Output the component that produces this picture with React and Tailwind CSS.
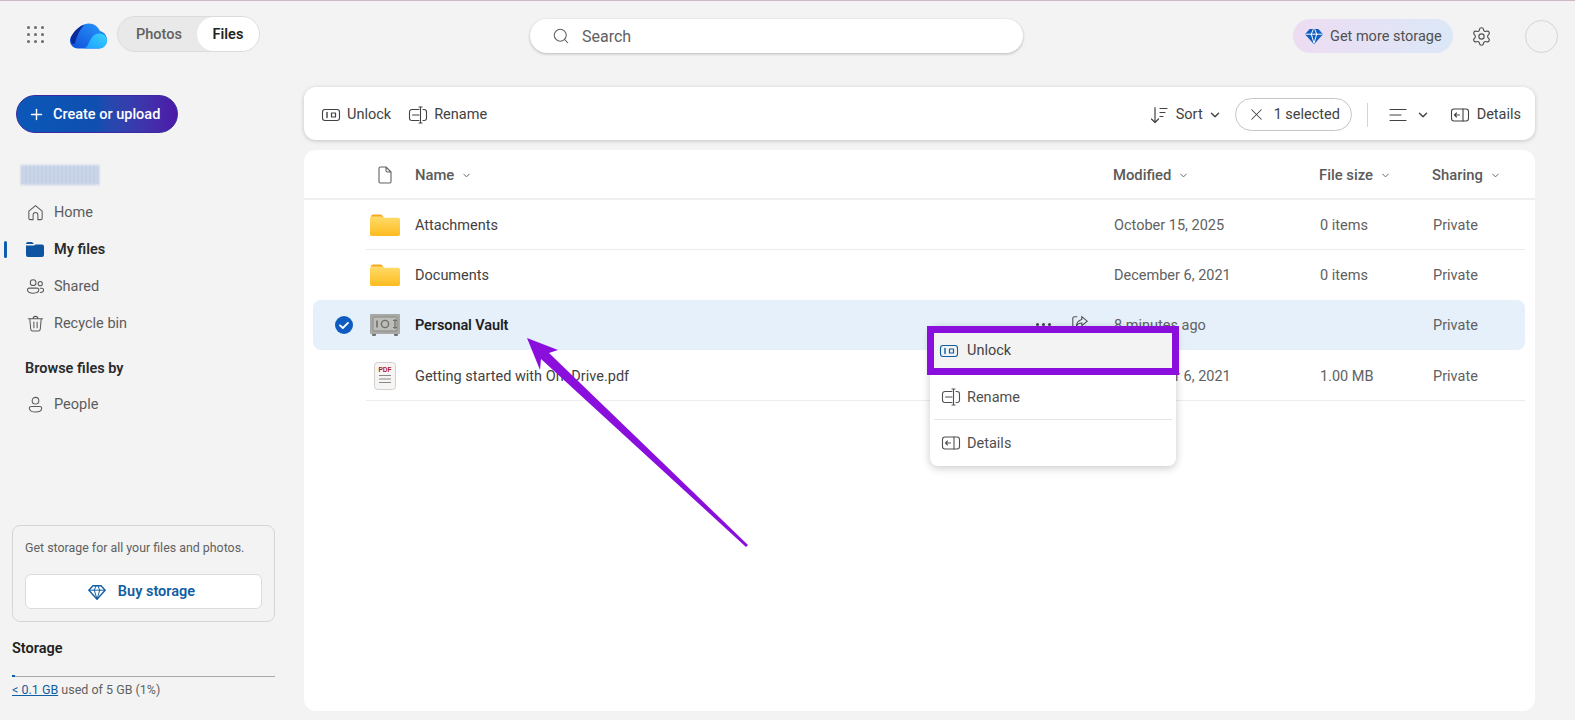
import React from 'react';
import { ChevronDown, Plus, Search, Settings, X } from 'lucide-react';

const Svg = ({ className = 'w-5 h-5', children, vb = '0 0 20 20' }) => (
  <svg viewBox={vb} fill="none" stroke="currentColor" strokeWidth="1.1" strokeLinecap="round" strokeLinejoin="round" className={className}>{children}</svg>
);

const UnlockIcon = ({ className }) => (
  <Svg className={className}>
    <rect x="1.5" y="4.5" width="17" height="11" rx="2.5" />
    <path d="M6 7.5v5" strokeWidth="1.4" />
    <rect x="10.5" y="8" width="4" height="4" strokeWidth="1.2" />
  </Svg>
);
const RenameIcon = ({ className }) => (
  <Svg className={className}>
    <path d="M11 4.5H4A2.5 2.5 0 0 0 1.5 7v6A2.5 2.5 0 0 0 4 15.5h7" />
    <path d="M4.5 10h6.5" />
    <path d="M11 2h3M11 18h3M12.5 2v16" />
    <path d="M15 4.5h1A2.5 2.5 0 0 1 18.5 7v6a2.5 2.5 0 0 1-2.5 2.5h-1" />
  </Svg>
);
const DetailsIcon = ({ className }) => (
  <Svg className={className}>
    <rect x="1.5" y="4" width="17" height="12" rx="2.5" />
    <path d="M13 4v12" />
    <path d="M9.5 10H4.5M6.5 8l-2 2 2 2" />
  </Svg>
);
const Diamond = ({ className, fill }) => (
  <Svg className={className}>
    <path d="M5.5 3h9L19 8l-9 10L1 8z" fill={fill} strokeWidth="1.5" />
    <path d="M1 8h18M7 8l3 10 3-10M7 8l2-5M13 8l-2-5" stroke={fill ? '#fff' : 'currentColor'} strokeWidth="1.1" />
  </Svg>
);
const Folder = () => (
  <svg viewBox="0 0 30 22" className="w-[30px] h-[22px]">
    <defs>
      <linearGradient id="fold" x1="0" y1="0" x2="0" y2="1">
        <stop offset="0" stopColor="#ffdc6b" />
        <stop offset="1" stopColor="#fdbb1f" />
      </linearGradient>
    </defs>
    <path d="M1 2.5A2 2 0 0 1 3 .5h7.5a2 2 0 0 1 1.5.7L14 3.5H1z" fill="#f5a821" />
    <path d="M0 4a1.5 1.5 0 0 1 1.5-1.5H12l2 1.2h14.2A1.8 1.8 0 0 1 30 5.5v14.7a1.8 1.8 0 0 1-1.8 1.8H1.8A1.8 1.8 0 0 1 0 20.2z" fill="url(#fold)" />
  </svg>
);
const Vault = () => (
  <svg viewBox="0 0 30 22" className="w-[30px] h-[22px]">
    <rect x="2" y="19" width="4" height="3" rx="1" fill="#707070" />
    <rect x="24" y="19" width="4" height="3" rx="1" fill="#707070" />
    <rect x="0" y="0" width="30" height="20" rx="1" fill="#a8a8a5" />
    <rect x="3" y="3" width="24" height="14" rx="1" fill="#bcbcb8" stroke="#8a8a87" />
    <path d="M7 6.5v7" stroke="#6e6e6c" strokeWidth="1.6" />
    <circle cx="15" cy="10" r="3.6" fill="none" stroke="#6e6e6c" strokeWidth="1.4" />
    <path d="M25 5v10M23 6.5h4M23 13.5h4" stroke="#6e6e6c" strokeWidth="1.2" />
  </svg>
);
const Pdf = () => (
  <svg viewBox="0 0 22 28" className="w-[22px] h-[28px]">
    <rect x=".5" y=".5" width="21" height="27" rx="3" fill="#f6f5f3" stroke="#d2d0ce" />
    <text x="4.5" y="10" fontSize="6.5" fontWeight="700" fill="#b2182b" fontFamily="Liberation Sans, sans-serif">PDF</text>
    <path d="M5 13.5h12M5 17h12M5 20.5h12" stroke="#8a8886" strokeWidth="1" />
  </svg>
);
const Cloud = () => (
  <svg viewBox="0 0 37 26" className="w-[37px] h-[26px]">
    <defs>
      <linearGradient id="cl1" x1="0" y1="1" x2="1" y2="0">
        <stop offset="0" stopColor="#0f4fd8" />
        <stop offset="1" stopColor="#2a9bff" />
      </linearGradient>
      <linearGradient id="cl2" x1="0" y1="1" x2="1" y2="0">
        <stop offset="0" stopColor="#1a9cff" />
        <stop offset="1" stopColor="#3ad4ff" />
      </linearGradient>
    </defs>
    <path d="M8 25.5C3 25.5 0 21.5 0 17.5 0 13.5 3 11 6 10.5 8 4 13 .5 19 .5c5 0 9 3 11 7.5 4 1 7 4 7 9s-4 8.5-8 8.5z" fill="url(#cl1)" />
    <path d="M1 14C4 8 9 3 14 2 10 6 7 12 5 20c-1 2-3 1-4-1z" fill="#0a2a9c" />
    <path d="M13 25.5c4 0 5-4 7-8s5-7 9-7c5 0 8 3 8 7.5 0 4-4 7.5-8 7.5z" fill="url(#cl2)" />
  </svg>
);

const NAV = [
  { label: 'Home', icon: <path d="M10 2.8 3 8.6V16a1.5 1.5 0 0 0 1.5 1.5h3v-5a2.5 2.5 0 0 1 5 0v5h3A1.5 1.5 0 0 0 17 16V8.6z" /> },
  { label: 'My files', active: true },
  { label: 'Shared', icon: <><circle cx="7.5" cy="6" r="3" /><path d="M1.5 13.5a1.8 1.8 0 0 1 1.8-1.8h8.4a1.8 1.8 0 0 1 1.8 1.8c0 2.2-2.5 3.5-6 3.5s-6-1.3-6-3.5z" /><circle cx="15" cy="7" r="2.2" /><path d="M15 11.8h1.5a2 2 0 0 1 2 2c0 1.5-1.5 2.5-3.5 2.5" /></> },
  { label: 'Recycle bin', icon: <path d="M2.5 5h15M7.5 5a2.5 2.5 0 0 1 5 0M4 5l1 11a2 2 0 0 0 2 1.8h6a2 2 0 0 0 2-1.8l1-11M8.3 8.5v6M11.7 8.5v6" /> },
];

const ROWS = [
  { name: 'Attachments', icon: <Folder />, modified: 'October 15, 2025', size: '0 items' },
  { name: 'Documents', icon: <Folder />, modified: 'December 6, 2021', size: '0 items' },
  { name: 'Personal Vault', icon: <Vault />, modified: '8 minutes ago', size: '', selected: true },
  { name: 'Getting started with OneDrive.pdf', icon: <Pdf />, modified: 'December 6, 2021', size: '1.00 MB' },
];

const COLS = 'grid grid-cols-[53px_49px_698px_206px_113px_93px] items-center';

function Sidebar() {
  return (
    <aside className="w-[304px] shrink-0 flex flex-col pb-[22px]">
      <button className="ml-[16px] mt-[24px] w-[162px] h-[38px] rounded-full flex items-center pl-[11px] pt-[1px] gap-[8px] text-white text-[14.5px] font-medium bg-gradient-to-r from-[#0a58b8] via-[#0f4fb0] to-[#4c17a8] border border-[#3a2ca0]">
        <Plus className="w-[17px] h-[17px]" strokeWidth={2} />Create or upload
      </button>
      <div className="ml-[21px] mt-[32px] w-[78px] h-[20px] blur-[1px] bg-[repeating-linear-gradient(90deg,#b4c4e0_0px,#b4c4e0_2px,#dbe2ee_2px,#dbe2ee_4px)]" />
      <nav className="mt-[9px] flex flex-col relative">
        {NAV.map((n) => (
          <div key={n.label} className={'h-[37px] flex items-center pl-[26px] relative ' + (n.active ? 'gap-[10px]' : 'gap-[9px]')}>
            {n.active && <span className="absolute left-[4px] top-[10px] w-[3px] h-[17px] rounded-full bg-[#0f5cb0]" />}
            {n.active ? (
              <svg viewBox="0 0 18 15" className="w-[18px] h-[15px] text-[#0f54a0]"><path d="M0 2a2 2 0 0 1 2-2h4l2 2H0zM0 3.5h8L9.5 2.5H16a2 2 0 0 1 2 2V13a2 2 0 0 1-2 2H2a2 2 0 0 1-2-2z" fill="currentColor" /></svg>
            ) : (
              <Svg className="w-[19px] h-[19px] text-[#5a5a5a]">{n.icon}</Svg>
            )}
            <span className={n.active ? 'text-[14.5px] font-semibold text-[#2b2b2b]' : 'text-[14.5px] text-[#5c5c5c]'}>{n.label}</span>
          </div>
        ))}
      </nav>
      <div className="ml-[25px] mt-[17px] text-[14.5px] font-semibold text-[#2b2b2b] leading-[20px]">Browse files by</div>
      <div className="h-[37px] mt-[7px] flex items-center pl-[26px] gap-[9px]">
        <Svg className="w-[19px] h-[19px] text-[#5a5a5a]"><circle cx="10" cy="6" r="3.5" /><path d="M3.5 14a2 2 0 0 1 2-2h9a2 2 0 0 1 2 2c0 2.5-2.8 4-6.5 4s-6.5-1.5-6.5-4z" /></Svg>
        <span className="text-[14.5px] text-[#5c5c5c]">People</span>
      </div>
      <div className="mt-auto mx-[12px] w-[263px] h-[97px] rounded-lg border border-[#d6d6d6] px-[12px] pt-[13px]">
        <div className="text-[12.4px] text-[#616161] leading-[18px]">Get storage for all your files and photos.</div>
        <button className="mt-[17px] w-full h-[35px] pt-[1px] pr-[4px] bg-white rounded-md border border-[#dcdcdc] flex items-center justify-center gap-[12px] text-[14.5px] font-semibold text-[#115ea3]">
          <Diamond className="w-[18px] h-[18px]" />Buy storage
        </button>
      </div>
      <div className="ml-[12px] mt-[17px] text-[14.5px] font-semibold text-[#1f1f1f] leading-[20px]">Storage</div>
      <div className="mx-[12px] mt-[17px] w-[263px] h-px bg-[#a9a9a9] relative">
        <span className="absolute left-0 top-[-1px] w-[3px] h-[2px] bg-[#0f5cb0]" />
      </div>
      <div className="ml-[12px] mt-[5px] text-[12.5px] leading-[16px] text-[#616161]"><span className="text-[#115ea3] underline">&lt; 0.1 GB</span> used of 5 GB (1%)</div>
    </aside>
  );
}

function Toolbar() {
  return (
    <div className="h-[53px] pt-[2px] bg-white rounded-xl shadow-[0_1px_4px_rgba(0,0,0,0.2)] flex items-center pl-[17px] pr-[14px] text-[14.5px] text-[#424242]">
      <UnlockIcon className="w-[20px] h-[20px]" />
      <span className="ml-[6px]">Unlock</span>
      <RenameIcon className="w-[20px] h-[20px] ml-[17px]" />
      <span className="ml-[6px]">Rename</span>
      <svg viewBox="0 0 20 20" fill="none" stroke="currentColor" strokeWidth="1.2" strokeLinecap="round" strokeLinejoin="round" className="w-[20px] h-[20px] ml-auto">
        <path d="M6 2.5v15M2.5 14l3.5 3.5 3.5-3.5M11 3.5h7M11 7.5h5M11 11.5h3" />
      </svg>
      <span className="ml-[7px]">Sort</span>
      <ChevronDown className="w-[14px] h-[14px] ml-[5px]" strokeWidth={2.4} />
      <div className="ml-[13px] h-[33px] w-[117px] rounded-full border border-[#c4c4c4] flex items-center pl-[11px] gap-[8px]">
        <X className="w-[19px] h-[19px]" strokeWidth={1.3} />1 selected
      </div>
      <div className="mx-[15px] w-px h-[24px] bg-[#d4d4d4]" />
      <svg viewBox="0 0 18 14" fill="none" stroke="currentColor" strokeWidth="1.2" strokeLinecap="round" className="w-[18px] h-[14px] ml-[6px]">
        <path d="M1 1.5h16M1 7h11M1 12.5h16" />
      </svg>
      <ChevronDown className="w-[14px] h-[14px] ml-[9px]" strokeWidth={2.4} />
      <DetailsIcon className="w-[20px] h-[20px] ml-[20px]" />
      <span className="ml-[7px]">Details</span>
    </div>
  );
}

function Head({ label }) {
  return (
    <div className="flex items-center gap-[7px] pt-[1px] text-[14.8px] font-medium text-[#5a5a5a]">
      {label}<ChevronDown className="w-[11px] h-[11px]" strokeWidth={2} />
    </div>
  );
}

function FileRows() {
  return (
    <div className="mx-[9px] w-[1212px]">
      {ROWS.map((r, i) => (
        <div key={r.name}>
          <div className={COLS + (i < 2 ? ' h-[49px]' : ' h-[50px]') + (i === 3 ? ' pt-[2px]' : '') + (r.selected ? ' rounded-lg bg-[#e5f0fb]' : '')}>
            <div className="flex justify-center pl-[8px]">
              {r.selected && (
                <svg viewBox="0 0 18 18" className="w-[18px] h-[18px]">
                  <circle cx="9" cy="9" r="9" fill="#0f5cc0" />
                  <path d="M5 9.3l2.8 2.7L13 6.8" fill="none" stroke="#fff" strokeWidth="1.8" strokeLinecap="round" strokeLinejoin="round" />
                </svg>
              )}
            </div>
            <div className="pl-[4px] flex items-center justify-start">
              {r.name.endsWith('.pdf') ? <span className="ml-[4px] flex"><Pdf /></span> : r.icon}
            </div>
            <div className="flex items-center justify-between pr-[24px]">
              <span className={r.selected ? 'pt-[1px] text-[14.5px] font-semibold tracking-[-0.1px] text-[#1f1f1f]' : 'pt-[2px] text-[14.5px] text-[#424242]'}>{r.name}</span>
              {r.selected && (
                <span className="flex items-center gap-[20px] text-[#505050] -mt-[4px]">
                  <span className="flex gap-[3px] mt-[2px]"><i className="w-[3px] h-[3px] rounded-full bg-[#424242]" /><i className="w-[3px] h-[3px] rounded-full bg-[#424242]" /><i className="w-[3px] h-[3px] rounded-full bg-[#424242]" /></span>
                  <svg viewBox="0 0 20 20" fill="none" stroke="currentColor" strokeWidth="1.2" className="w-[18px] h-[18px]"><path d="M7 3H4a2 2 0 0 0-2 2v10a2 2 0 0 0 2 2h10a2 2 0 0 0 2-2v-2M12 3l6 5-6 5v-3c-3 0-5 1-6 4 0-5 2-7 6-8z" /></svg>
                </span>
              )}
            </div>
            <div className="pl-[1px] pt-[2px] text-[14.5px] text-[#616161]">{r.modified}</div>
            <div className="pl-[1px] pt-[2px] text-[14.5px] text-[#616161]">{r.size}</div>
            <div className="pl-[1px] pt-[2px] text-[14.5px] text-[#616161]">Private</div>
          </div>
          {i === 0 || i === 3 ? <div className="ml-[53px] h-px bg-[#ececec]" /> : null}
          {i === 1 ? <div className="h-px" /> : null}
        </div>
      ))}
    </div>
  );
}

function ContextMenu() {
  return (
    <div className="absolute left-[930px] top-[325px] w-[246px] h-[140px] bg-white rounded-lg shadow-[0_2px_8px_rgba(0,0,0,0.22)] text-[14.5px] text-[#505050]">
      <div className="-mx-[3px] h-[49px] border-[7px] border-[#8a0fdc] bg-[#f3f3f3] flex items-center pl-[5px] gap-[8px] text-[#424242]">
        <UnlockIcon className="w-[20px] h-[20px] text-[#115ea3]" /><span className="pt-[1px]">Unlock</span>
      </div>
      <div className="h-[44px] flex items-center pl-[11px] gap-[6px]"><RenameIcon className="w-[20px] h-[20px]" /><span className="pt-[1px]">Rename</span></div>
      <div className="mx-[4px] h-px bg-[#e4e4e4]" />
      <div className="h-[46px] flex items-center pl-[11px] gap-[6px]"><DetailsIcon className="w-[20px] h-[20px]" /><span className="pt-[1px]">Details</span></div>
    </div>
  );
}

export default function App() {
  return (
    <div className="relative w-[1575px] h-[720px] overflow-hidden bg-[#f3f3f3] border-t border-[#cdb8c8] flex flex-col font-['Roboto',sans-serif]">
      <header className="h-[70px] shrink-0 flex items-center text-[#424242]">
        <div className="ml-[27px] mb-[3px] grid grid-cols-3 gap-[4px]">
          {Array.from({ length: 9 }).map((_, i) => <i key={i} className="w-[3px] h-[3px] rounded-full bg-[#6a6a6a]" />)}
        </div>
        <div className="ml-[26px] flex"><Cloud /></div>
        <div className="ml-[10px] mb-[4px] w-[143px] h-[36px] rounded-full bg-[#e9e9e9] border border-[#dcdcdc] flex items-center text-[14.5px] font-medium">
          <span className="ml-[18px] pt-[1px] text-[#616161]">Photos</span>
          <span className="ml-auto w-[62px] h-[34px] pt-[1px] rounded-full bg-white flex items-center justify-center text-[#242424] font-semibold">Files</span>
        </div>
        <div className="ml-[270px] w-[493px] h-[34px] rounded-full bg-white shadow-[0_1px_3px_rgba(0,0,0,0.25)] flex items-center pl-[22px] gap-[12px] text-[16px] text-[#616161]">
          <Search className="w-[18px] h-[18px]" strokeWidth={1.4} /><span className="pt-[2px]">Search</span>
        </div>
        <div className="ml-[270px] w-[160px] h-[34px] rounded-full bg-gradient-to-r from-[#eddcf2] to-[#dbe8f7] flex items-center pl-[12px] gap-[7px] text-[14.5px] text-[#505050]">
          <Diamond className="w-[18px] h-[18px] text-[#115ec0]" fill="#115ec0" /><span className="pt-[1px]">Get more storage</span>
        </div>
        <Settings className="ml-[18px] w-[21px] h-[21px] text-[#505050]" strokeWidth={1.3} />
        <div className="ml-[33px] w-[33px] h-[33px] rounded-full border border-[#d4d4d4]" />
      </header>
      <div className="flex flex-1 min-h-0">
        <Sidebar />
        <main className="w-[1231px] flex flex-col pt-[16px] gap-[10px] pb-[9px]">
          <Toolbar />
          <div className="flex-1 bg-white rounded-xl">
            <div className={COLS + ' h-[49px] mx-[9px] w-[1212px]'}>
              <div />
              <div className="pl-[12px]">
                <svg viewBox="0 0 14 18" fill="none" stroke="#616161" strokeWidth="1.1" strokeLinejoin="round" className="w-[14px] h-[18px]"><path d="M1 2.5A1.5 1.5 0 0 1 2.5 1H8l5 5v9.5a1.5 1.5 0 0 1-1.5 1.5h-9A1.5 1.5 0 0 1 1 15.5zM8 1v3.5A1.5 1.5 0 0 0 9.5 6H13" /></svg>
              </div>
              <Head label="Name" />
              <Head label="Modified" />
              <Head label="File size" />
              <Head label="Sharing" />
            </div>
            <div className="h-[2px] bg-[#efefef] -mt-[1px]" />
            <FileRows />
          </div>
        </main>
      </div>
      <ContextMenu />
      <svg viewBox="520 330 240 225" className="absolute left-[520px] top-[329px] w-[240px] h-[225px] pointer-events-none">
        <polygon points="527,338 558,350 549,353 748,545 746,547 541,359 540,370" fill="#8a0fdc" />
      </svg>
    </div>
  );
}
